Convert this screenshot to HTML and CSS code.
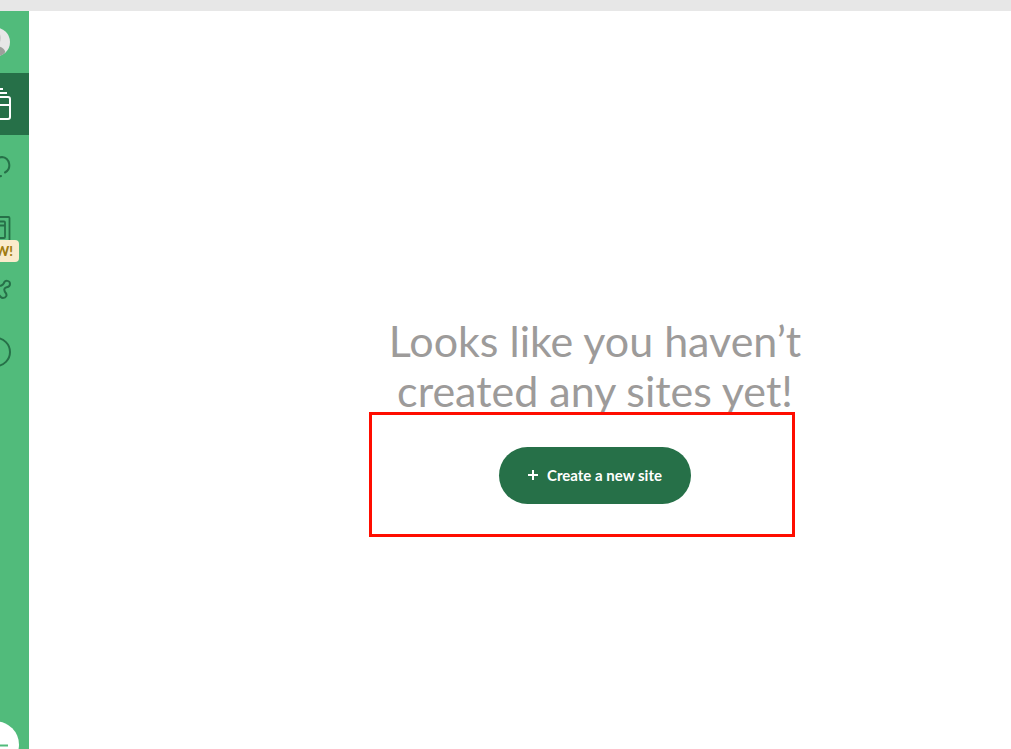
FILE: index.html
```html
<!DOCTYPE html>
<html lang="en">
<head>
<meta charset="utf-8">
<title>Sites</title>
<link rel="stylesheet" href="styles.css">
</head>
<body>
<div class="topbar"></div>
<div class="app">
  <nav class="sidebar" aria-label="Main">
    <a class="item" href="#" aria-label="Account">
      <svg class="icon" viewBox="0 0 29 62"><circle cx="-4.500" cy="31" r="14.500" fill="#e7e7e7"/><path d="M-10 27a5.500 6.500 0 0 1 11 0c0 4-2 7-5.500 7s-5.500-3-5.500-7z" fill="#cecece"/><path d="M-13 41c1-4 5-6 8.500-6s9 2 9.800 6c-2 3-6 4.500-9.800 4.500s-7-1-8.500-4.500z" fill="#9d9f9b"/></svg>
    </a>
    <a class="item item-active" href="#" aria-label="Local sites" aria-current="page">
      <svg class="icon line-white" viewBox="0 0 29 62"><path d="M-10 16H3M-14 20H7"/><rect x="-19" y="24" width="29" height="22" rx="2"/><path d="M-19 32H10"/></svg>
    </a>
    <a class="item" href="#" aria-label="Connect">
      <svg class="icon line" viewBox="0 0 29 62"><path d="M-3 24C-1 22.500 0 22 2 22A8.300 8.300 0 0 1 5 37.500M-4 41Q0 41.500 1 41"/></svg>
    </a>
    <a class="item" href="#" aria-label="Blueprints, new">
      <svg class="icon line line-thin" viewBox="0 0 29 62"><path d="M-18 20H8.500Q9.500 20 9.500 21V48H-18z"/><path d="M-13 24.500H4Q5 24.500 5 25.500V40Q5 41 4 41H-13M-13 28.500H5"/></svg>
      <span class="badge">NEW!</span>
    </a>
    <a class="item" href="#" aria-label="Add-ons">
      <svg class="icon line" viewBox="0 0 29 62"><path d="M-2 26C0 28 3 26 4 24C5 21 10 21 10 25C10 28 8 28 6 28.500C4 29 4 31 5 33C8 36 6 39 3 39Q1 39 0 37L-3 34"/></svg>
    </a>
    <a class="item" href="#" aria-label="Help">
      <svg class="icon line" viewBox="0 0 29 62"><circle cx="-4" cy="31" r="14"/></svg>
    </a>
    <button class="add" type="button" aria-label="Add site">
      <svg class="add-icon" viewBox="0 0 29 28"><circle cx="-4" cy="23.500" r="23" fill="#fff"/><path d="M-16 24.500H8" stroke="#51bb7b" stroke-width="2"/></svg>
    </button>
  </nav>
  <main class="main">
    <section class="empty">
      <h1 class="title">Looks like you haven’t<br>created any sites yet!</h1>
      <button class="create" type="button">
        <svg class="plus" viewBox="0 0 10 10"><path d="M5 0V10M0 5H10"/></svg>
        Create a new site
      </button>
      <div class="highlight"></div>
    </section>
  </main>
</div>
</body>
</html>
```
FILE: styles.css
```css
* { box-sizing: border-box; }
body {
  margin: 0;
  height: 100vh;
  display: flex;
  flex-direction: column;
  overflow: hidden;
  background: #fff;
  font-family: Lato, "Open Sans", sans-serif;
}
.topbar { height: 11px; flex: none; background: #e7e7e7; }
.app { flex: 1; min-height: 0; display: flex; }
.sidebar {
  width: 29px;
  flex: none;
  display: flex;
  flex-direction: column;
  overflow: hidden;
  background: #51bb7b;
}
.item { position: relative; display: block; height: 62px; flex: none; }
.item-active { background: #267048; }
.icon { display: block; width: 29px; height: 62px; }
.line, .line-white {
  fill: none;
  stroke: #267048;
  stroke-width: 2;
  stroke-linecap: round;
}
.line-white { stroke: #fff; stroke-linecap: butt; }
.line-thin { stroke-width: 1.8; }
.badge {
  position: absolute;
  right: 10px;
  top: 43px;
  z-index: 1;
  padding: 0 6px;
  border-radius: 4px;
  background: #faebcb;
  color: #a07c10;
  font-size: 13px;
  font-weight: 900;
  line-height: 22px;
}
.add {
  margin-top: auto;
  padding: 0;
  border: 0;
  background: none;
}
.add-icon { display: block; width: 29px; height: 28px; }
.main { flex: 1; padding: 305px 0 0 150px; }
.empty {
  position: relative;
  display: flex;
  flex-direction: column;
  align-items: center;
  gap: 31px;
}
.title {
  margin: 0;
  color: #9d9b9a;
  font-size: 43px;
  font-weight: 400;
  line-height: 50px;
  text-align: center;
}
.create {
  display: flex;
  align-items: center;
  gap: 9px;
  height: 57px;
  padding: 0 29px 2px;
  border: 0;
  border-radius: 29px;
  background: #267048;
  color: #fff;
  font: 700 15px Lato, sans-serif;
}
.plus { width: 10px; height: 10px; stroke: #fff; stroke-width: 2; }
.highlight {
  position: absolute;
  top: 96px;
  left: calc(50% - 226px);
  width: 426px;
  height: 125px;
  border: 3px solid #ff0d00;
  pointer-events: none;
}
```
